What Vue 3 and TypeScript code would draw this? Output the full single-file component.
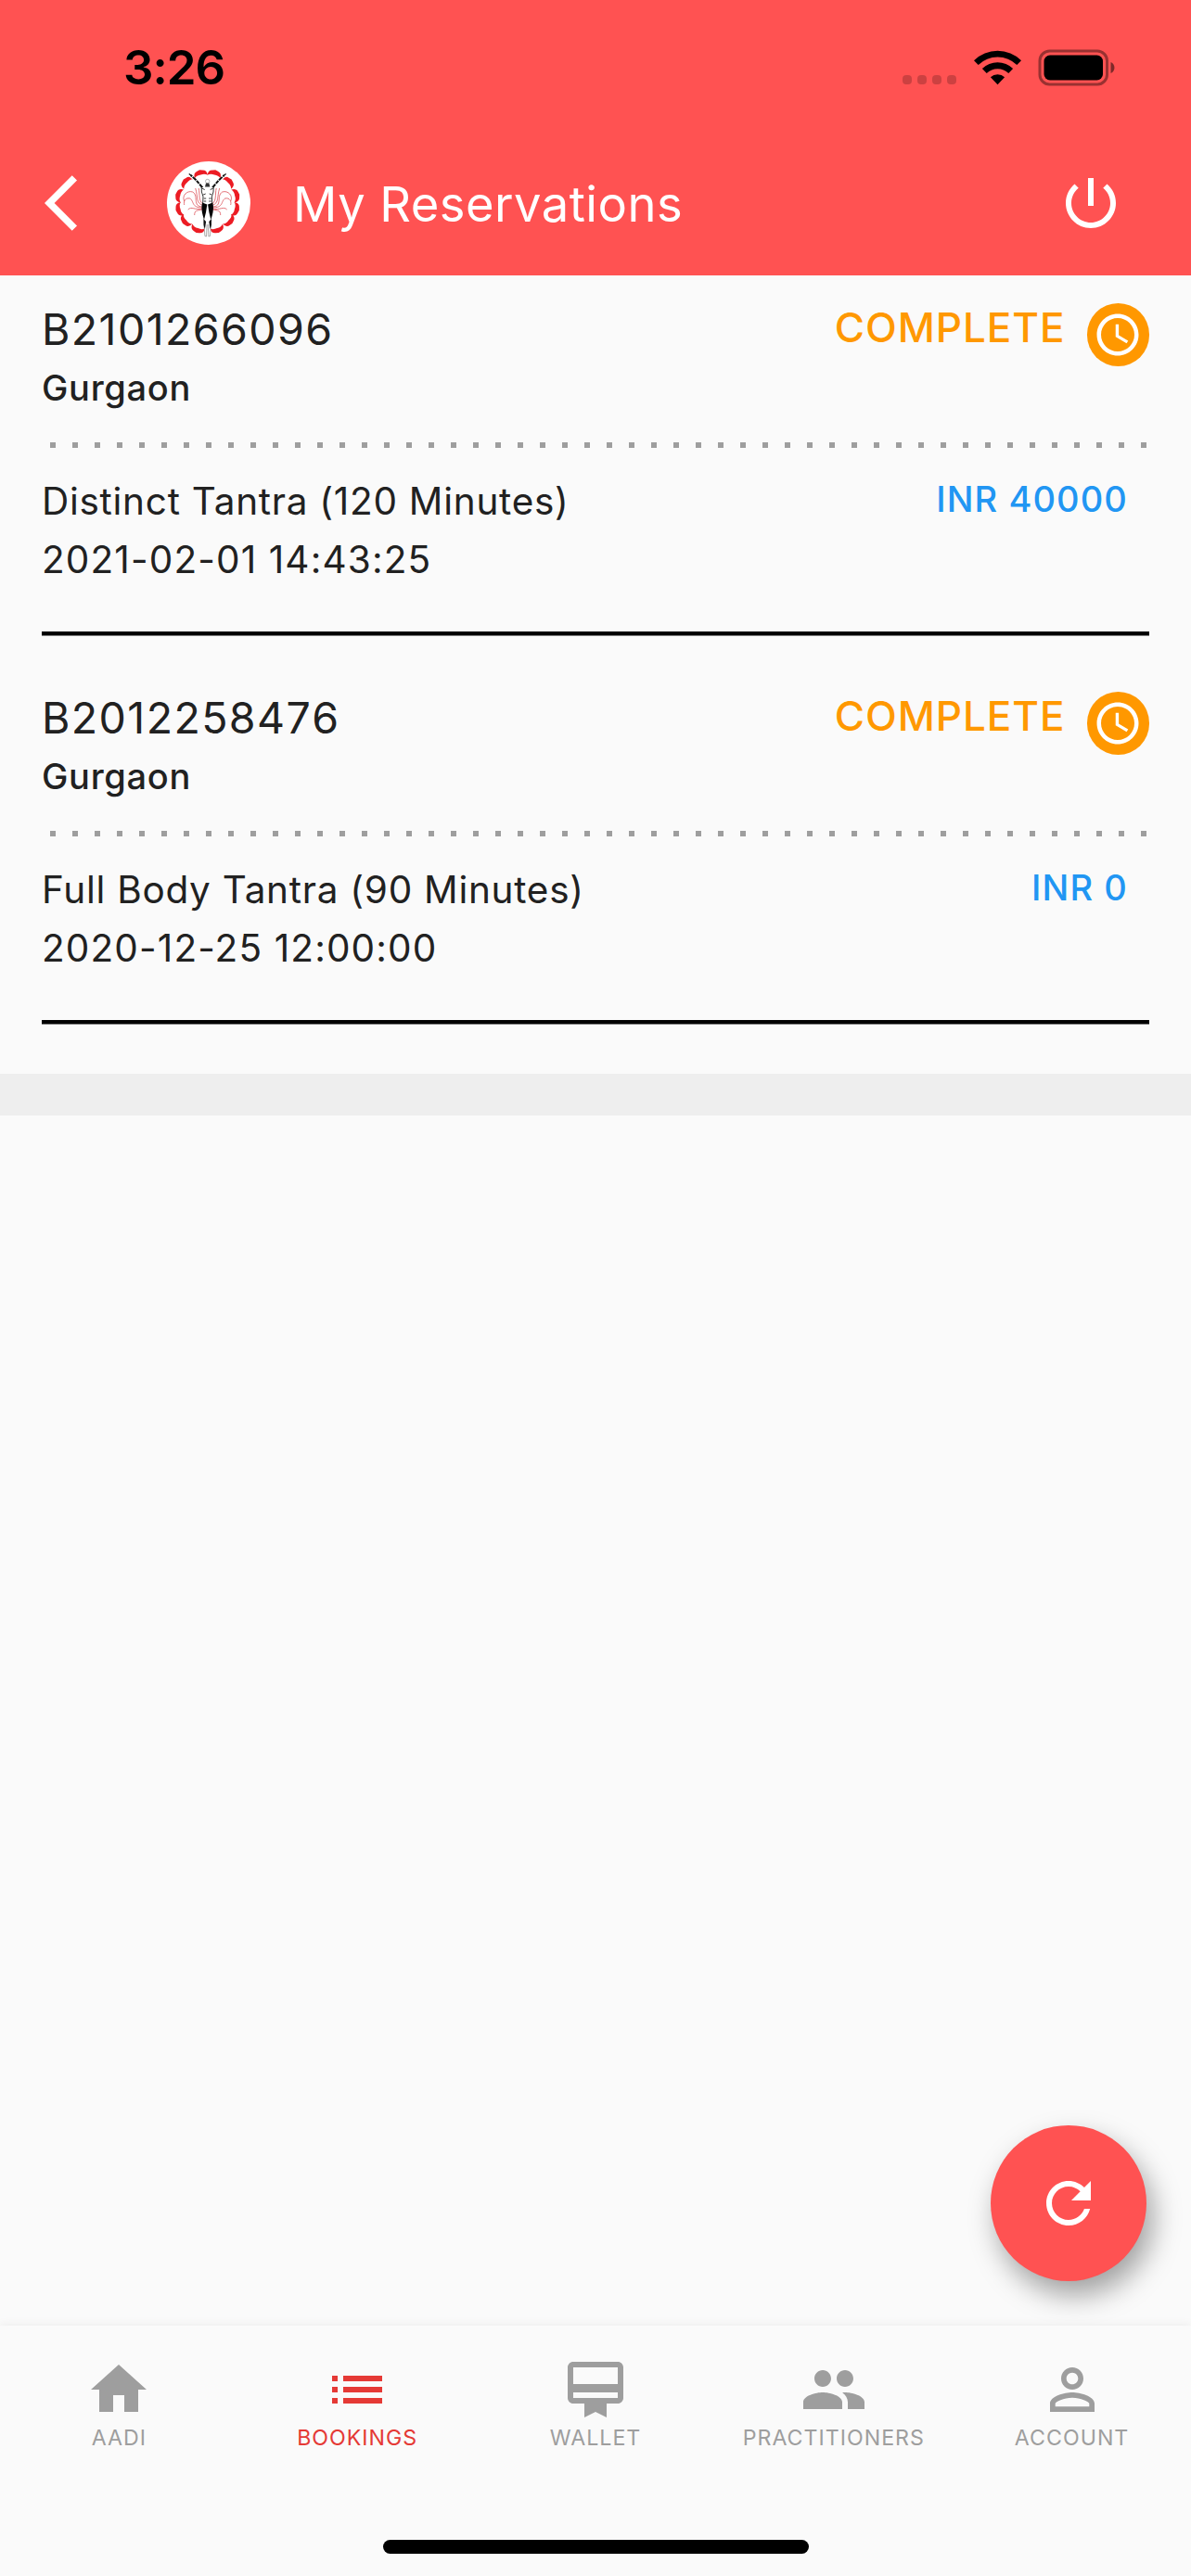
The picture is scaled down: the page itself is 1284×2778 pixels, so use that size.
<script setup lang="ts">
interface Booking {
  id: string
  city: string
  status: string
  service: string
  date: string
  price: string
}

interface Tab {
  label: string
  icon: string
  active?: boolean
}

const bookings: Booking[] = [
  {
    id: 'B2101266096',
    city: 'Gurgaon',
    status: 'COMPLETE',
    service: 'Distinct Tantra (120 Minutes)',
    date: '2021-02-01 14:43:25',
    price: 'INR 40000',
  },
  {
    id: 'B2012258476',
    city: 'Gurgaon',
    status: 'COMPLETE',
    service: 'Full Body Tantra (90 Minutes)',
    date: '2020-12-25 12:00:00',
    price: 'INR 0',
  },
]

const tabs: Tab[] = [
  { label: 'AADI', icon: 'M10 20v-6h4v6h5v-8h3L12 3 2 12h3v8z' },
  {
    label: 'BOOKINGS',
    icon: 'M3 13h2v-2H3v2zm0 4h2v-2H3v2zm0-8h2V7H3v2zm4 4h14v-2H7v2zm0 4h14v-2H7v2zM7 7v2h14V7H7z',
    active: true,
  },
  {
    label: 'WALLET',
    icon: 'M20 2H4c-1.11 0-2 .89-2 2v11c0 1.11.89 2 2 2h4v5l4-2 4 2v-5h4c1.11 0 2-.89 2-2V4c0-1.11-.89-2-2-2zm0 13H4v-2h16v2zm0-5H4V4h16v6z',
  },
  {
    label: 'PRACTITIONERS',
    icon: 'M16 11c1.66 0 2.99-1.34 2.99-3S17.66 5 16 5c-1.66 0-3 1.34-3 3s1.34 3 3 3zm-8 0c1.66 0 2.99-1.34 2.99-3S9.66 5 8 5C6.34 5 5 6.34 5 8s1.34 3 3 3zm0 2c-2.33 0-7 1.17-7 3.5V19h14v-2.5c0-2.33-4.67-3.5-7-3.5zm8 0c-.29 0-.62.02-.97.05 1.16.84 1.97 1.97 1.97 3.45V19h6v-2.5c0-2.33-4.67-3.5-7-3.5z',
  },
  {
    label: 'ACCOUNT',
    icon: 'M12 5.9c1.16 0 2.1.94 2.1 2.1s-.94 2.1-2.1 2.1S9.9 9.16 9.9 8s.94-2.1 2.1-2.1m0 9c2.97 0 6.1 1.46 6.1 2.1v1.1H5.9V17c0-.64 3.13-2.1 6.1-2.1M12 4C9.79 4 8 5.79 8 8s1.79 4 4 4 4-1.79 4-4-1.79-4-4-4zm0 9c-2.67 0-8 1.34-8 4v3h16v-3c0-2.66-5.33-4-8-4z',
  },
]

// Angles of the emblem's petals, clockwise from the top.
const petals = [14, 47, 77, 105, 131, 160, -160, -131, -105, -77, -47, -14]
</script>

<template>
  <div class="screen">
    <header class="header">
      <div class="status-bar">
        <span class="clock">3:26</span>
        <div class="indicators">
          <div class="signal"><i v-for="n in 4" :key="n" /></div>
          <svg class="wifi" width="51" height="38" viewBox="0 0 51 38">
            <path d="M0 11.2A36.5 36.5 0 0 1 51 11.2L46.3 16A29.8 29.8 0 0 0 4.700 16Z" />
            <path d="M8.900 20.100A23.700 23.700 0 0 1 42.100 20.100L37.300 25A17 17 0 0 0 13.700 25Z" />
            <path d="M17.900 29.300A11 11 0 0 1 33.100 29.300L25.500 37.200Z" />
          </svg>
          <svg class="battery" width="84" height="40" viewBox="0 0 84 40">
            <rect x="2" y="2" width="72.500" height="36" rx="10.500" fill="none" stroke="#000" stroke-opacity=".4" stroke-width="3" />
            <rect x="6.500" y="6.500" width="63.500" height="27" rx="6.500" />
            <path d="M78.500 14c5.300 2.200 5.300 9.800 0 12z" fill-opacity=".5" />
          </svg>
        </div>
      </div>
      <div class="app-bar">
        <svg class="back" width="72" height="72" viewBox="0 0 24 24" fill="#fff">
          <path d="M11.670 3.870L9.900 2.100 0 12l9.900 9.900 1.770-1.770L3.540 12z" />
        </svg>
        <svg class="logo" width="90" height="90" viewBox="0 0 90 90">
          <circle cx="45" cy="45" r="45" fill="#fff" />
          <g transform="translate(43.700 43.700)" fill="#ec1c24">
            <path
              v-for="angle in petals"
              :key="angle"
              :transform="`rotate(${angle})`"
              d="M-7.200 -28Q-7.600 -33.800 -3 -34.600L0 -35.400L3 -34.600Q7.600 -33.800 7.200 -28Q4.500 -30.800 0 -30.200Q-4.500 -30.800 -7.200 -28Z"
            />
          </g>
          <g v-for="side in [1, -1]" :key="side" :transform="`translate(43.700 0) scale(${side} 1)`">
            <g fill="none" stroke="#dc5058" stroke-width=".8">
              <path d="M5 49C17 49 9 37 16 33C22 31 28 37 25 43" />
              <path d="M5 50C18 50 14 43 19 40C24 39 26 43 25 47" />
              <path d="M5 47.500C13 45 10 38 13 29" />
              <path d="M5 46C10 42 8 36 9.500 29" />
              <path d="M5 51C14 53 17 48 21 52" />
              <path d="M5 52C12 53 14 53 14 58" />
            </g>
            <path d="M1 30L5.500 29.500L12.500 21L18.500 15.500" fill="none" stroke="#fff" stroke-width="2.600" />
            <path d="M5.300 28.500L12 20.500L18 15" fill="none" stroke="#111" stroke-width="2" stroke-dasharray="5 1 4 .8" />
            <path d="M16.500 16L20 13.500" stroke="#111" stroke-width="1.200" />
            <path d="M0 28.500L6.500 28L6.300 33L4.700 38L5 45L5.500 50L3.500 65L3 80L1.200 81L.4 66L0 52Z" fill="#fff" />
            <path d="M6.500 28L6.300 33L4.700 38L5 45" fill="none" stroke="#222" stroke-width=".9" />
            <path d="M3.600 70L2.800 80.500L1.200 81L.6 68" fill="none" stroke="#888" stroke-width=".7" />
            <path d="M6.300 29L3 30.500M4.600 36L2 35M4 40H1.500M4 43H1.500" stroke="#222" stroke-width=".9" fill="none" />
            <path d="M.4 46.500L5.600 44.500Q7.200 51 5 58.500L3.700 63L1.700 55Z" fill="#050505" />
            <path d="M4.300 62L4.200 69L2.800 73L1.600 65Z" fill="#111" />
          </g>
          <circle cx="43.700" cy="21.500" r="2.200" fill="#fff" stroke="#999" stroke-width=".7" />
          <path d="M42 23.500h3.400l1 4h-5.400z" fill="#333" />
        </svg>
        <h1 class="title">My Reservations</h1>
        <svg class="power" width="72" height="72" viewBox="0 0 24 24" fill="#fff">
          <path d="M13 3h-2v10h2V3zm4.830 2.170l-1.420 1.420C17.990 7.860 19 9.810 19 12c0 3.870-3.130 7-7 7s-7-3.130-7-7c0-2.190 1.010-4.140 2.580-5.420L6.170 5.170C4.230 6.820 3 9.260 3 12c0 4.970 4.030 9 9 9s9-4.030 9-9c0-2.740-1.230-5.180-3.170-6.830z" />
        </svg>
      </div>
    </header>

    <main class="content">
      <article v-for="booking in bookings" :key="booking.id" class="booking">
        <div class="row">
          <div>
            <div class="booking-id">{{ booking.id }}</div>
            <div class="city">{{ booking.city }}</div>
          </div>
          <div class="status">
            <span class="status-text">{{ booking.status }}</span>
            <span class="status-icon">
              <svg width="54" height="54" viewBox="0 0 24 24" fill="#fff">
                <path d="M11.990 2C6.470 2 2 6.480 2 12s4.470 10 9.990 10C17.520 22 22 17.520 22 12S17.520 2 11.990 2zM12 20c-4.420 0-8-3.580-8-8s3.580-8 8-8 8 3.580 8 8-3.580 8-8 8zm.5-13H11v6l5.250 3.150.75-1.230-4.500-2.670z" />
              </svg>
            </span>
          </div>
        </div>
        <div class="dots" />
        <div class="row">
          <div>
            <div class="service">{{ booking.service }}</div>
            <div class="date">{{ booking.date }}</div>
          </div>
          <div class="price">{{ booking.price }}</div>
        </div>
        <div class="rule" />
      </article>
      <div class="band" />
      <button class="fab" aria-label="Refresh">
        <svg width="72" height="72" viewBox="0 0 24 24" fill="#fff">
          <path d="M17.650 6.350C16.200 4.900 14.210 4 12 4c-4.420 0-7.990 3.580-7.990 8s3.570 8 7.990 8c3.730 0 6.840-2.550 7.730-6h-2.080c-.82 2.330-3.040 4-5.650 4-3.310 0-6-2.690-6-6s2.690-6 6-6c1.660 0 3.140.69 4.220 1.780L13 11h7V4l-2.350 2.350z" />
        </svg>
      </button>
    </main>

    <footer class="footer">
      <nav class="tabs">
        <div v-for="tab in tabs" :key="tab.label" class="tab" :class="{ active: tab.active }">
          <svg width="72" height="72" viewBox="0 0 24 24" fill="currentColor"><path :d="tab.icon" /></svg>
          <span>{{ tab.label }}</span>
        </div>
      </nav>
      <div class="home-indicator" />
    </footer>
  </div>
</template>

<style>
body {
  margin: 0;
  background: #fafafa;
}
</style>

<style scoped>
.screen {
  display: flex;
  flex-direction: column;
  width: 1284px;
  height: 2778px;
  overflow: hidden;
  background: #fafafa;
  color: #212121;
  font-family: Inter, "Liberation Sans", sans-serif;
  white-space: nowrap;
}

svg {
  display: block;
  flex: none;
}

.header {
  flex: none;
  height: 297px;
  background: #ff5252;
}

.status-bar {
  display: flex;
  justify-content: space-between;
  height: 141px;
  color: #000;
}

.clock {
  margin: 43px 0 0 133px;
  font-size: 51px;
  font-weight: 600;
  line-height: 60px;
  letter-spacing: -1px;
}

.indicators {
  display: flex;
  align-items: flex-start;
  padding: 53px 81px 0 0;
}

.signal {
  display: flex;
  gap: 6px;
  margin: 28px 19px 0 0;
}

.signal i {
  width: 10px;
  height: 10px;
  border-radius: 4px;
  background: rgba(0, 0, 0, 0.2);
}

.wifi {
  margin: 1px 18px 0 0;
}

.app-bar {
  display: flex;
  align-items: center;
  height: 156px;
  padding: 0 72px 0 48px;
}

.logo {
  margin-left: 60px;
}

.title {
  flex: 1;
  margin: 2px 0 0 46px;
  color: #fff;
  font-size: 52.5px;
  font-weight: 400;
  line-height: 64px;
  letter-spacing: 0.45px;
}

.content {
  position: relative;
  flex: 1;
}

.booking {
  box-sizing: border-box;
  height: 419px;
  padding: 30px 45px 0;
}

.row {
  display: flex;
  justify-content: space-between;
  align-items: flex-start;
}

.booking-id {
  font-size: 46.5px;
  line-height: 56px;
  letter-spacing: 1.4px;
  font-kerning: none;
}

.city {
  margin-top: 10px;
  font-size: 38px;
  font-weight: 500;
  line-height: 50px;
  letter-spacing: 0.7px;
}

.status {
  display: flex;
  align-items: flex-start;
}

.status-text {
  margin-right: 23px;
  color: #ff9800;
  font-size: 44px;
  font-weight: 500;
  line-height: 52px;
  letter-spacing: 0.95px;
}

.status-icon {
  display: flex;
  align-items: center;
  justify-content: center;
  width: 67.5px;
  height: 67.5px;
  border-radius: 50%;
  background: #ff9800;
}

.dots {
  height: 6px;
  margin: 34px 3px 32px 9px;
  background: repeating-linear-gradient(to right, #9e9e9e 0 6px, transparent 6px 24px);
}

.service,
.date {
  font-size: 40.5px;
  line-height: 50px;
  letter-spacing: 0.73px;
}

.service {
  margin-top: 1px;
}

.date {
  margin-top: 13px;
  letter-spacing: 1.13px;
}

.price {
  margin-right: 23px;
  color: #2196f3;
  font-size: 38px;
  font-weight: 500;
  line-height: 46px;
  letter-spacing: 1.1px;
}

.rule {
  height: 4.5px;
  margin-top: 52px;
  background: linear-gradient(#000 4px, #808080 4px);
}

.band {
  height: 45px;
  margin-top: 23px;
  background: #eee;
}

.fab {
  position: absolute;
  right: 48px;
  bottom: 48px;
  display: flex;
  align-items: center;
  justify-content: center;
  width: 168px;
  height: 168px;
  padding: 0;
  border: 0;
  border-radius: 50%;
  background: #ff5252;
  box-shadow: 7px 15px 30px rgba(0, 0, 0, 0.36);
}

.footer {
  position: relative;
  display: flex;
  flex: none;
  flex-direction: column;
  align-items: center;
  justify-content: space-between;
  box-sizing: border-box;
  height: 270px;
  padding: 33px 0 24px;
  background: #fafafa;
  box-shadow: 0 -2px 9px rgba(0, 0, 0, 0.05);
}

.tabs {
  display: flex;
  width: 100%;
}

.tab {
  display: flex;
  flex: 1;
  flex-direction: column;
  align-items: center;
  width: 0;
  color: #9e9e9e;
  font-size: 23.2px;
  line-height: 32px;
  letter-spacing: 1px;
}

.tab.active {
  color: #e53935;
}

.home-indicator {
  width: 459px;
  height: 15px;
  border-radius: 8px;
  background: #000;
}
</style>
